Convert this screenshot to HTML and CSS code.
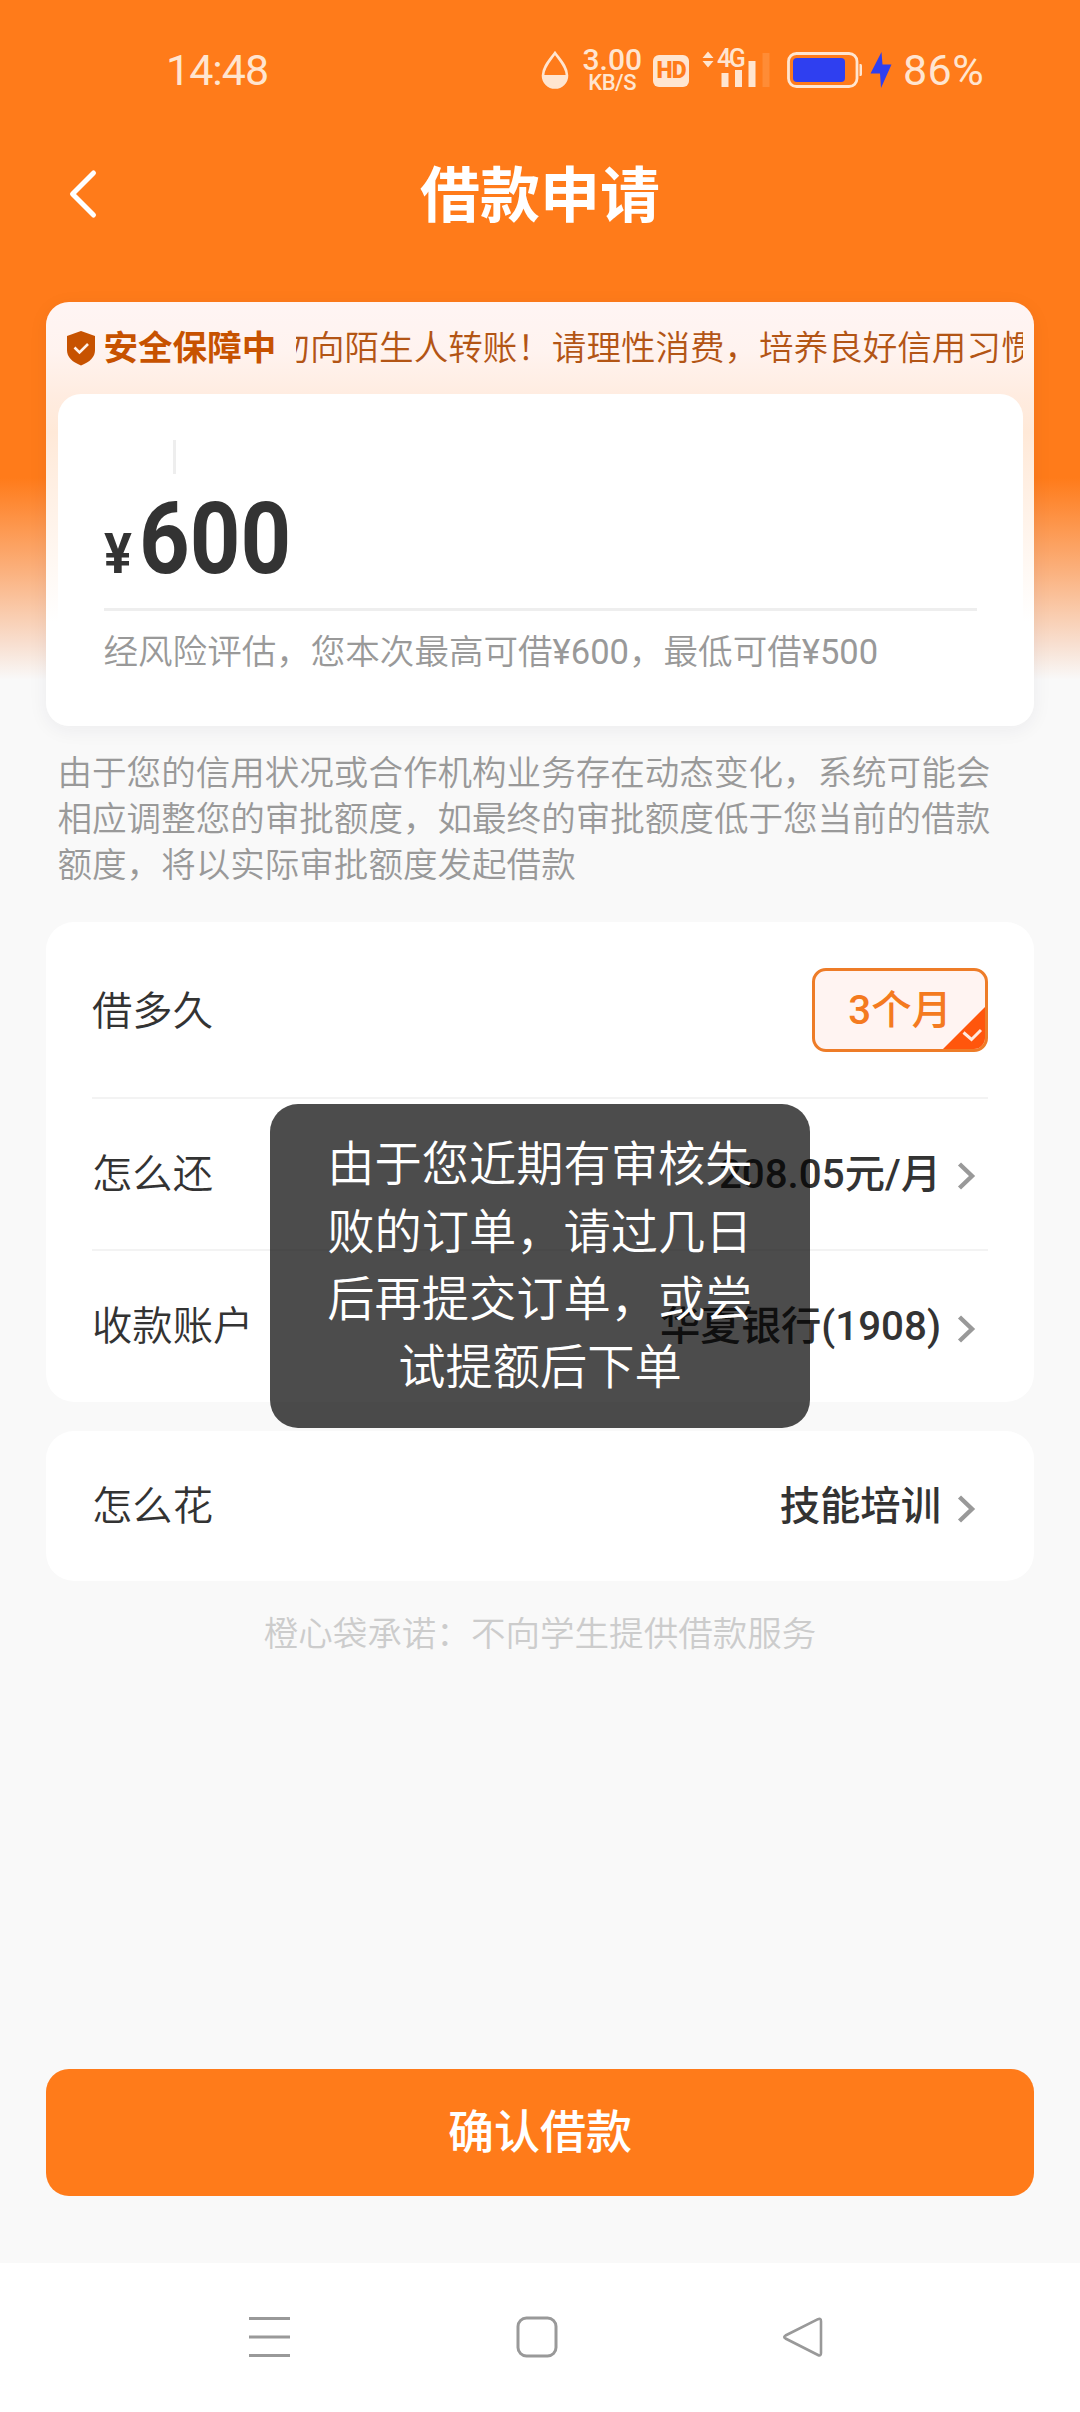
FILE: index.html
```html
<!DOCTYPE html>
<html lang="zh-CN">
<head>
<meta charset="utf-8">
<title>借款申请</title>
<link rel="stylesheet" href="styles.css">
</head>
<body>
<div class="screen">
  <header class="status">
    <span class="clock">14:48</span>
    <div class="indicators">
      <svg class="drop" width="28" height="40" viewBox="0 0 28 40"><path d="M14 3C9 10 2 17 2 25.500a12 12 0 0 0 24 0C26 17 19 10 14 3z" fill="none" stroke="currentColor" stroke-width="2.600"/><path d="M2 25a12 12 0 0 0 24 0z" fill="currentColor"/></svg>
      <div class="speed"><span class="rate">3.00</span><span class="unit">KB/S</span></div>
      <span class="hd">HD</span>
      <div class="network">
        <svg width="70" height="40" viewBox="0 0 70 40"><path d="M7 1.500l5.500 6.500h-11zM7 17.500l5.500-6.500h-11z" fill="currentColor"/><path d="M20.500 23h7v14h-7zM34 20h7v17h-7zM47.500 11h7v26h-7z" fill="currentColor"/><path d="M61.500 3h7v34h-7z" fill="currentColor" opacity=".16"/></svg>
        <span class="gen">4G</span>
      </div>
      <svg class="battery" width="76" height="38" viewBox="0 0 76 38"><rect x="1.500" y="2.500" width="68.500" height="33" rx="8" fill="none" stroke="currentColor" stroke-width="2.800"/><rect x="6" y="7" width="52" height="24" rx="4" fill="#2f3ff0"/><path d="M72.500 13h1.500a2 2 0 0 1 1 2v8a2 2 0 0 1-1 2h-1.500z" fill="currentColor"/></svg>
      <svg class="bolt" width="22" height="38" viewBox="0 0 22 38"><path d="M11.500 1L.5 22.500h9.500L11 37 21.500 13.500H12.500z" fill="#2f3ff0"/></svg>
      <span class="percent">86%</span>
    </div>
  </header>

  <nav class="title-bar">
    <svg class="back" width="32" height="52" viewBox="0 0 32 52"><path d="M26.500 5L5.500 26l21 21" fill="none" stroke="#fff" stroke-width="5" stroke-linecap="round" stroke-linejoin="round"/></svg>
    <h1>借款申请</h1>
  </nav>

  <main class="content">
    <section class="amount-card">
      <div class="notice">
        <svg class="shield" width="30" height="36" viewBox="0 0 30 36"><path d="M15 1l14 5v14c0 7-5 12-14 15.500C6 32 1 27 1 20V6z" fill="#c75200"/><path d="M8.500 17.500l5 5 8.500-8.500" fill="none" stroke="#fff1ea" stroke-width="2.600"/></svg>
        <strong>安全保障中</strong>
        <div class="marquee"><span>勿向陌生人转账！请理性消费，培养良好信用习惯</span></div>
      </div>
      <div class="amount-panel">
        <i class="caret"></i>
        <div class="amount"><span class="yen">¥</span><span class="figure">600</span></div>
        <p class="range">经风险评估，您本次最高可借<b>¥600</b>，最低可借<b>¥500</b></p>
      </div>
    </section>

    <p class="disclaimer">由于您的信用状况或合作机构业务存在动态变化，系统可能会相应调整您的审批额度，如最终的审批额度低于您当前的借款额度，将以实际审批额度发起借款</p>

    <section class="card">
      <div class="row term">
        <span class="label">借多久</span>
        <span class="chip">3个月<svg width="42" height="42" viewBox="0 0 42 42"><path d="M42 0v42H0z" fill="#ff560c"/><path d="M20.500 25.500l8 7L38 23" fill="none" stroke="#ffe9de" stroke-width="3"/></svg></span>
      </div>
      <div class="row">
        <span class="label">怎么还</span>
        <span class="value">208.05元/月</span>
        <svg class="arrow" width="20" height="32" viewBox="0 0 20 32"><path d="M3.500 4L16 16 3.500 28" fill="none" stroke="#999" stroke-width="4.400"/></svg>
      </div>
      <div class="row">
        <span class="label">收款账户</span>
        <span class="value">华夏银行(1908)</span>
        <svg class="arrow" width="20" height="32" viewBox="0 0 20 32"><path d="M3.500 4L16 16 3.500 28" fill="none" stroke="#999" stroke-width="4.400"/></svg>
      </div>
    </section>

    <section class="card usage">
      <div class="row">
        <span class="label">怎么花</span>
        <span class="value">技能培训</span>
        <svg class="arrow" width="20" height="32" viewBox="0 0 20 32"><path d="M3.500 4L16 16 3.500 28" fill="none" stroke="#999" stroke-width="4.400"/></svg>
      </div>
    </section>

    <p class="promise">橙心袋承诺：不向学生提供借款服务</p>
    <button class="confirm">确认借款</button>
  </main>

  <footer class="system-nav">
    <svg width="44" height="44" viewBox="0 0 44 44"><path d="M2 3.500h41M2 22h41M2 40.500h41" stroke="#999" stroke-width="3"/></svg>
    <svg width="44" height="44" viewBox="0 0 44 44"><rect x="4" y="3" width="38" height="38" rx="8.500" fill="none" stroke="#999" stroke-width="3"/></svg>
    <svg width="44" height="44" viewBox="0 0 44 44"><path d="M37 4.200L4.500 20.500q-2.500 1.500 0 3L37 40q3 1.500 3-2V6.500q0-3.700-3-2.300z" fill="none" stroke="#999" stroke-width="2.600"/></svg>
  </footer>

  <div class="toast">由于您近期有审核失败的订单，请过几日后再提交订单，或尝试提额后下单</div>
</div>
</body>
</html>
```
FILE: styles.css
```css
* { box-sizing: border-box; margin: 0; padding: 0; }

body {
  font-family: Roboto, "Noto Sans CJK SC", sans-serif;
  color: #333;
  background: #f9f9f9;
}

.screen {
  position: relative;
  display: flex;
  flex-direction: column;
  width: 1080px;
  height: 2412px;
  overflow: hidden;
  background: linear-gradient(#ff7b1a 0, #ff7b1a 478px, #fbb07c 570px, #f8dfd0 644px, #f9f9f9 680px);
}

/* System status bar */
.status {
  display: flex;
  justify-content: space-between;
  align-items: center;
  height: 140px;
  padding: 0 93px 0 166px;
  color: #ffe5d0;
}
.clock, .percent { font-size: 43px; letter-spacing: -1px; line-height: 50px; }
.indicators { display: flex; align-items: center; }
.speed {
  display: flex;
  flex-direction: column;
  align-items: flex-end;
  width: 60px;
  margin: 1px 1px 0 13px;
  font-weight: 500;
}
.rate { font-size: 30px; line-height: 25px; }
.unit { font-size: 22px; line-height: 22px; padding-right: 6px; letter-spacing: -.5px; }
.hd {
  width: 36px;
  height: 32px;
  margin: 2px 0 0 10px;
  border-radius: 6px;
  background: #ffe5d0;
  color: #ff7b1a;
  font: 900 23px/32px Roboto, sans-serif;
  letter-spacing: -1px;
  text-align: center;
}
.network { position: relative; width: 70px; height: 40px; margin-left: 12px; }
.gen {
  position: absolute;
  left: 16px;
  top: -3px;
  font-size: 25px;
  line-height: 24px;
  font-weight: 500;
  letter-spacing: -2.500px;
}
.network svg, .drop, .battery, .bolt { display: block; }
.battery { margin-left: 16px; }
.bolt { margin-left: 7px; }
.percent { width: 84px; margin-left: 11px; white-space: nowrap; letter-spacing: .4px; }

/* Page title */
.title-bar {
  display: grid;
  grid-template-columns: 96px 1fr 96px;
  align-items: center;
  height: 108px;
}
.back { justify-self: end; margin-right: -3px; }
h1 {
  padding-top: 6px;
  font-size: 60px;
  line-height: 72px;
  font-weight: 700;
  color: #fff;
  text-align: center;
}

.content {
  display: flex;
  flex-direction: column;
  flex: 1;
  padding: 54px 46px 67px;
}

/* Amount */
.amount-card {
  height: 424px;
  padding: 0 11.500px;
  border-radius: 23px;
  background: linear-gradient(#fff5f4 0, #fff3ef 50px, #ffece0 95px, #ffe9d8 130px, #fff 320px);
  box-shadow: 0 4px 20px rgba(30, 30, 60, .06);
}
.notice { display: flex; align-items: center; height: 92px; padding-left: 8px; }
.notice strong {
  margin-left: 8px;
  font-size: 34.560px;
  line-height: 44px;
  font-weight: 700;
  color: #c75200;
}
.marquee {
  display: flex;
  flex: 1;
  justify-content: flex-end;
  margin-left: 20px;
  overflow: hidden;
  font-size: 34.560px;
  line-height: 50px;
  font-weight: 350;
  color: #b35515;
  white-space: nowrap;
}
.marquee span { margin-right: -13px; }
.amount-panel {
  display: flex;
  flex-direction: column;
  height: 332px;
  padding: 46px 46px 0;
  border-radius: 23px;
  background: #fff;
}
.caret { width: 3px; height: 34px; margin-left: 69px; background: #eee; }
.amount {
  display: flex;
  align-items: baseline;
  height: 137px;
  border-bottom: 3px solid #eee;
  font-weight: 700;
  white-space: nowrap;
}
.yen { width: 35px; font-size: 56px; transform: scaleX(.93); transform-origin: left; }
.figure { font-size: 101px; line-height: 130px; transform: scaleX(.875); transform-origin: left; }
.range { margin-top: 17px; font-size: 34.560px; line-height: 48px; font-weight: 350; color: #999; }
.range b { font-weight: 400; }

.disclaimer {
  margin: 24px 11.500px 0;
  font-size: 34.560px;
  line-height: 46px;
  font-weight: 350;
  color: #999;
}

/* Loan options */
.card {
  margin-top: 34px;
  padding: 0 46px;
  border-radius: 28px;
  background: #fff;
}
.row {
  display: flex;
  align-items: center;
  height: 151.500px;
  border-bottom: 2px solid #f3f3f3;
  font-size: 40.320px;
}
.row:last-child { border-bottom: 0; }
.term { height: 177px; }
.label { flex: 1; padding-bottom: 7px; font-weight: 350; }
.term .label { padding-bottom: 4px; }
.value { padding-bottom: 7px; font-weight: 500; }
.arrow { margin: 5px 12px 0 15px; }
.chip {
  position: relative;
  width: 176px;
  height: 84px;
  border: 3px solid #ee7c28;
  border-radius: 14px;
  overflow: hidden;
  background: #fff4f2;
  color: #f47a20;
  font-weight: 500;
  line-height: 80px;
  text-align: center;
}
.chip svg { position: absolute; right: 0; bottom: 0; }
.usage { margin-top: 29px; }
.usage .row { height: 150px; }

.promise {
  margin-top: 29px;
  font-size: 34.560px;
  line-height: 48px;
  font-weight: 350;
  color: #ccc;
  text-align: center;
}
.confirm {
  height: 127px;
  margin-top: auto;
  padding-bottom: 2px;
  border: 0;
  border-radius: 23px;
  background: #ff7b1a;
  color: #fff;
  font: 500 46px/60px Roboto, "Noto Sans CJK SC", sans-serif;
}

/* System navigation */
.system-nav {
  display: flex;
  justify-content: space-between;
  padding: 52px 255px 0 247px;
  height: 149px;
  background: #fff;
}

/* Message over the form */
.toast {
  position: absolute;
  left: 270px;
  top: 1104px;
  width: 540px;
  height: 324px;
  padding: 28px 54px 0;
  border-radius: 28px;
  background: rgba(0, 0, 0, .7);
  color: #fff;
  font-size: 47.250px;
  line-height: 67.500px;
  font-weight: 350;
  text-align: center;
}
```
